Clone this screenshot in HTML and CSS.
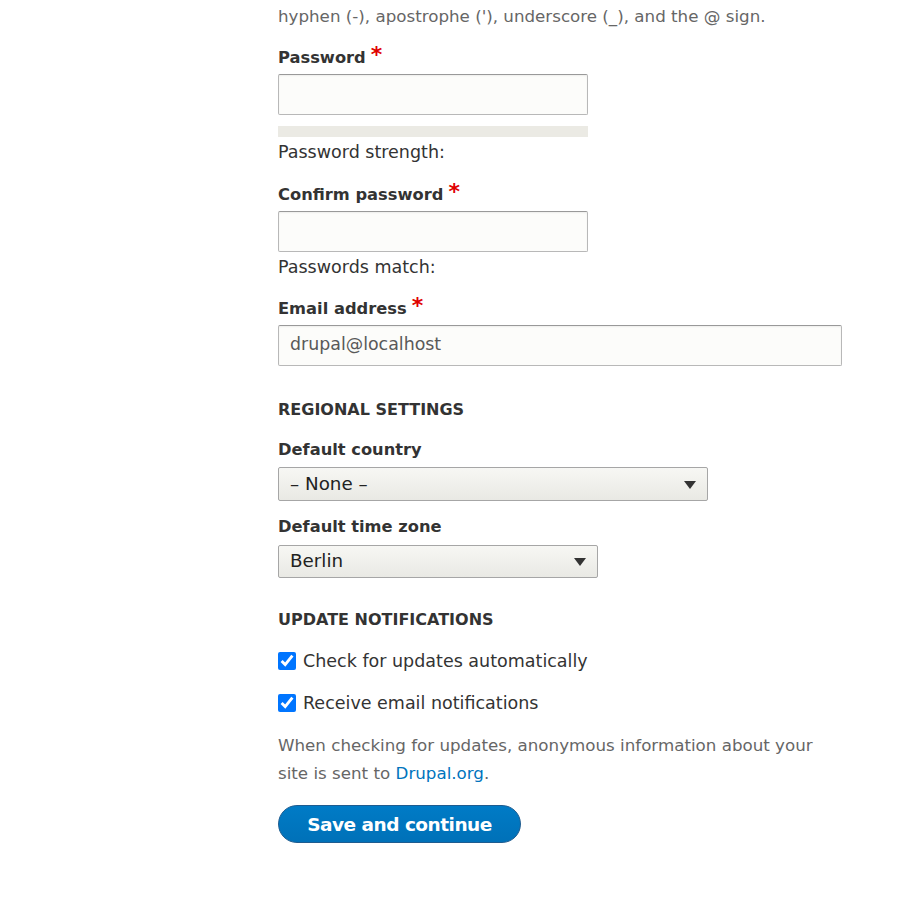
FILE: index.html
```html
<!DOCTYPE html>
<html lang="en">
<head>
<meta charset="utf-8">
<title>Configure site</title>
<link rel="stylesheet" href="styles.css">
</head>
<body>
<main class="page">
  <form class="install-form">
    <p class="description desc-top">hyphen (-), apostrophe ('), underscore (_), and the @ sign.</p>

    <div class="form-item item-password">
      <label class="label required" for="pass1">Password</label>
      <input class="text-input narrow" id="pass1" type="password">
      <div class="strength-bar"></div>
      <div class="helper helper-strength">Password strength:</div>
    </div>

    <div class="form-item item-confirm">
      <label class="label required" for="pass2">Confirm password</label>
      <input class="text-input narrow" id="pass2" type="password">
      <div class="helper helper-match">Passwords match:</div>
    </div>

    <div class="form-item item-email">
      <label class="label required" for="mail">Email address</label>
      <input class="text-input wide email-input" id="mail" type="text" value="drupal@localhost">
    </div>

    <h2 class="section-title regional">REGIONAL SETTINGS</h2>

    <div class="form-item item-country">
      <div class="label">Default country</div>
      <div class="select select-country">
        <span class="select-value">– None –</span>
        <svg class="select-arrow" width="12" height="8" viewBox="0 0 12 8"><path d="M0 0 H12 L6 8 Z" fill="#333"/></svg>
      </div>
    </div>

    <div class="form-item item-timezone">
      <div class="label">Default time zone</div>
      <div class="select select-timezone">
        <span class="select-value">Berlin</span>
        <svg class="select-arrow" width="12" height="8" viewBox="0 0 12 8"><path d="M0 0 H12 L6 8 Z" fill="#333"/></svg>
      </div>
    </div>

    <h2 class="section-title updates">UPDATE NOTIFICATIONS</h2>

    <label class="check-row row-first"><input type="checkbox" class="checkbox" checked> <span>Check for updates automatically</span></label>
    <label class="check-row row-second"><input type="checkbox" class="checkbox" checked> <span>Receive email notifications</span></label>

    <p class="description desc-bottom">When checking for updates, anonymous information about your<br>site is sent to <a href="#" class="link">Drupal.org</a>.</p>

    <div class="actions">
      <button type="button" class="button-primary">Save and continue</button>
    </div>
  </form>
</main>
</body>
</html>
```

FILE: styles.css
```css
html, body {
  margin: 0;
  padding: 0;
  background: #ffffff;
}

body {
  font-family: "DejaVu Sans", "Liberation Sans", sans-serif;
  color: #333333;
  font-size: 17.5px;
}

.page {
  padding-left: 278px;
  width: 600px;
}

.install-form {
  display: flex;
  flex-direction: column;
  align-items: flex-start;
}

.description {
  margin: 0;
  font-size: 16.7px;
  line-height: 28px;
  color: #666666;
}

.desc-top {
  margin-top: 2px;
}

.form-item {
  display: flex;
  flex-direction: column;
  align-items: flex-start;
}

.label {
  display: block;
  font-weight: bold;
  font-size: 16.3px;
  line-height: 24px;
  color: #333333;
  margin-bottom: 4px;
}

.required::after {
  content: "*";
  color: #e00000;
  font-size: 22px;
  font-weight: bold;
  margin-left: 5px;
  vertical-align: top;
  line-height: 20px;
  position: relative;
  top: -1px;
}

.item-password { margin-top: 16px; }
.item-confirm { margin-top: 19px; }
.item-email { margin-top: 18px; }
.item-country { margin-top: 16px; }
.item-timezone { margin-top: 14px; }

.item-country .label { margin-bottom: 5px; }
.item-timezone .label { margin-bottom: 6px; }

.text-input {
  box-sizing: border-box;
  height: 41px;
  margin: 0;
  padding: 0 11px;
  border: 1px solid #b8b8b8;
  border-top-color: #999999;
  border-radius: 2px;
  background: #fcfcfa;
  box-shadow: inset 0 1px 2px rgba(0, 0, 0, 0.06);
  font-family: "DejaVu Sans", "Liberation Sans", sans-serif;
  font-size: 17.4px;
  color: #595959;
  outline: none;
}

.email-input {
  padding-bottom: 3px;
}

.narrow { width: 310px; }
.wide { width: 564px; }

.strength-bar {
  width: 310px;
  height: 11px;
  margin-top: 11px;
  background: #ebeae4;
}

.helper {
  font-size: 17.5px;
  line-height: 24px;
  color: #333333;
}

.helper-strength { margin-top: 3px; }
.helper-match { margin-top: 3px; }

.section-title {
  margin: 0;
  font-size: 16px;
  font-weight: bold;
  line-height: 24px;
  color: #333333;
  text-transform: uppercase;
}

.regional { margin-top: 32px; }
.updates { margin-top: 30px; }

.select {
  box-sizing: border-box;
  display: flex;
  align-items: center;
  justify-content: space-between;
  padding: 0 11px 0 11px;
  border: 1px solid #a6a6a6;
  border-radius: 2px;
  background: linear-gradient(to bottom, #f7f7f4, #e9e9e4);
  color: #222222;
  font-size: 18.3px;
}

.select-value {
  position: relative;
  top: -1px;
}

.select-country { width: 430px; height: 34px; }
.select-timezone { width: 320px; height: 33px; }

.select-arrow {
  flex: none;
  display: block;
  margin-top: 1px;
}

.check-row {
  display: flex;
  align-items: center;
  gap: 7px;
  line-height: 24px;
  font-size: 17.5px;
  color: #333333;
}

.row-first { margin-top: 17px; }
.row-second { margin-top: 18px; }

.checkbox {
  width: 18px;
  height: 18px;
  margin: 0;
  accent-color: #0075ff;
}

.desc-bottom { margin-top: 16px; }

.link {
  color: #0074bd;
  text-decoration: none;
}

.actions {
  margin-top: 18px;
}

.button-primary {
  box-sizing: border-box;
  width: 243px;
  height: 38px;
  padding: 0 18px;
  border: 1px solid #1e5c90;
  border-radius: 20em;
  background: linear-gradient(to bottom, #007bc6, #0071b8);
  color: #ffffff;
  font-family: "DejaVu Sans", "Liberation Sans", sans-serif;
  font-weight: bold;
  font-size: 18.5px;
  letter-spacing: -0.5px;
  cursor: pointer;
}
```
